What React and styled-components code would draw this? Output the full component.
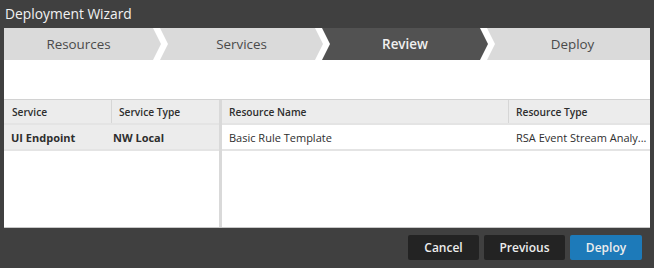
import React from 'react';
import styled, {createGlobalStyle} from 'styled-components';

const GlobalStyle = createGlobalStyle`
  html, body {
    margin: 0;
    padding: 0;
    background: #404040;
  }

  body {
    font-family: "Open Sans", "Liberation Sans", sans-serif;
  }
`;

const Window = styled.div`
  width: 654px;
  height: 268px;
  background: #404040;
  display: flex;
  flex-direction: column;
  overflow: hidden;
`;

const TitleBar = styled.div`
  height: 28px;
  padding-left: 5px;
  display: flex;
  align-items: center;
  color: #f2f2f2;
  font-size: 13.8px;
  box-sizing: border-box;
  padding-bottom: 1px;
`;

const Panel = styled.div`
  margin: 0 4px;
  height: 199px;
  background: #fff;
  border-bottom: 1px solid #c8c8c8;
  display: flex;
  flex-direction: column;
`;

const Steps = styled.div`
  height: 32px;
  display: flex;
  background: #fff;
`;

const ARROW = 8;

const shape = (first, last) => {
    const notch = first ? '0 100%' : `0 100%, ${ARROW}px 50%`;
    const right = last
        ? '100% 0, 100% 100%'
        : `calc(100% - ${ARROW}px) 0, 100% 50%, calc(100% - ${ARROW}px) 100%`;
    return `polygon(0 0, ${right}, ${notch})`;
};

const Step = styled.div`
  width: ${p => p.$width}px;
  flex: none;
  margin-left: ${p => (p.$first ? 0 : -1)}px;
  padding-left: ${p => (p.$first ? 0 : ARROW)}px;
  padding-right: ${p => (p.$last ? 0 : ARROW)}px;
  box-sizing: border-box;
  display: flex;
  align-items: center;
  justify-content: center;
  clip-path: ${p => shape(p.$first, p.$last)};
  background: ${p => (p.$active ? '#525252' : '#dadada')};
  color: ${p => (p.$active ? '#f0f0f0' : '#4a4a4a')};
  font-size: 13.4px;
  font-weight: ${p => (p.$active ? 600 : 400)};
`;

const Spacer = styled.div`
  height: 39px;
`;

const Tables = styled.div`
  flex: 1;
  display: flex;
  border-top: 1px solid #d2d2d2;
`;

const Table = styled.div`
  width: ${p => (p.$width ? `${p.$width}px` : 'auto')};
  flex: ${p => (p.$width ? 'none' : 1)};
  border-right: ${p => (p.$divider ? '3px solid #d9d9d9' : 'none')};
  display: flex;
  flex-direction: column;
  min-width: 0;
`;

const Row = styled.div`
  display: grid;
  grid-template-columns: ${p => p.$cols};
  height: ${p => (p.$head ? 23 : 24)}px;
  background: ${p => (p.$head || p.$selected ? '#ececec' : '#fff')};
  border-bottom: 2px solid #e4e4e4;
`;

const Cell = styled.div`
  display: flex;
  align-items: center;
  padding-left: ${p => p.$pad}px;
  border-left: ${p => (p.$line ? '1px solid #d6d6d6' : 'none')};
  color: #2e2e2e;
  font-size: ${p => (p.$head ? 10.2 : 11)}px;
  font-weight: ${p => (p.$head ? 600 : p.$bold ? 700 : 400)};
  white-space: nowrap;
  overflow: hidden;
  min-width: 0;
`;

const Footer = styled.div`
  display: flex;
  justify-content: flex-end;
  gap: 5px;
  padding: 7px 12px 0 0;
`;

const Button = styled.button`
  height: 25px;
  width: ${p => p.$width}px;
  border: none;
  border-radius: 2px;
  background: ${p => (p.$primary ? '#1d7ab9' : '#232323')};
  color: #ededed;
  font-family: "Open Sans", "Liberation Sans", sans-serif;
  font-size: 12px;
  font-weight: 600;
  padding: 0;
`;

const steps = [
    {label: 'Resources', width: 157},
    {label: 'Services', width: 163},
    {label: 'Review', width: 166, active: true},
    {label: 'Deploy', width: 163},
];

const leftCols = '107px 1fr';
const rightCols = '286px 1fr';

function App() {
    return (
        <Window>
            <GlobalStyle/>
            <TitleBar>Deployment Wizard</TitleBar>
            <Panel>
                <Steps>
                    {steps.map((s, i) => (
                        <Step
                            key={s.label}
                            $width={s.width}
                            $first={i === 0}
                            $last={i === steps.length - 1}
                            $active={s.active}>
                            {s.label}
                        </Step>
                    ))}
                </Steps>
                <Spacer/>
                <Tables>
                    <Table $width={215} $divider>
                        <Row $head $cols={leftCols}>
                            <Cell $head $pad={8}>Service</Cell>
                            <Cell $head $line $pad={7}>Service Type</Cell>
                        </Row>
                        <Row $selected $cols={leftCols}>
                            <Cell $bold $pad={7}>UI Endpoint</Cell>
                            <Cell $bold $pad={2}>NW Local</Cell>
                        </Row>
                    </Table>
                    <Table>
                        <Row $head $cols={rightCols}>
                            <Cell $head $pad={7}>Resource Name</Cell>
                            <Cell $head $line $pad={7}>Resource Type</Cell>
                        </Row>
                        <Row $cols={rightCols}>
                            <Cell $pad={7}>Basic Rule Template</Cell>
                            <Cell $pad={8}>RSA Event Stream Analy...</Cell>
                        </Row>
                    </Table>
                </Tables>
            </Panel>
            <Footer>
                <Button $width={71}>Cancel</Button>
                <Button $width={81}>Previous</Button>
                <Button $width={72} $primary>Deploy</Button>
            </Footer>
        </Window>
    );
}

export default App;
